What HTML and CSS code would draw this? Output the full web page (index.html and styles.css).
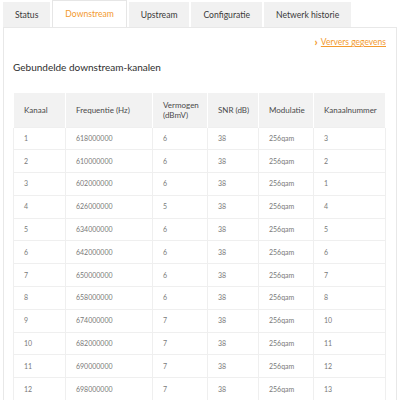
FILE: index.html
```html
<!DOCTYPE html>
<html lang="nl">
<head>
<meta charset="utf-8">
<title>Downstream</title>
<link rel="stylesheet" href="styles.css">
</head>
<body>
<nav class="tabs">
  <div class="tab">Status</div>
  <div class="tab active">Downstream</div>
  <div class="tab">Upstream</div>
  <div class="tab">Configuratie</div>
  <div class="tab">Netwerk historie</div>
</nav>
<main class="panel">
  <div class="refresh"><a href="#" class="link"><span class="chev">›</span><span class="link-text">Ververs gegevens</span></a></div>
  <h2 class="title">Gebundelde downstream-kanalen</h2>
  <table class="grid">
    <colgroup>
      <col class="c1"><col class="c2"><col class="c3"><col class="c4"><col class="c5"><col class="c6">
    </colgroup>
    <thead>
      <tr><th>Kanaal</th><th>Frequentie (Hz)</th><th>Vermogen<br>(dBmV)</th><th>SNR (dB)</th><th>Modulatie</th><th>Kanaalnummer</th></tr>
    </thead>
    <tbody>
      <tr><td>1</td><td>618000000</td><td>6</td><td>38</td><td>256qam</td><td>3</td></tr>
      <tr><td>2</td><td>610000000</td><td>6</td><td>38</td><td>256qam</td><td>2</td></tr>
      <tr><td>3</td><td>602000000</td><td>6</td><td>38</td><td>256qam</td><td>1</td></tr>
      <tr><td>4</td><td>626000000</td><td>5</td><td>38</td><td>256qam</td><td>4</td></tr>
      <tr><td>5</td><td>634000000</td><td>6</td><td>38</td><td>256qam</td><td>5</td></tr>
      <tr><td>6</td><td>642000000</td><td>6</td><td>38</td><td>256qam</td><td>6</td></tr>
      <tr><td>7</td><td>650000000</td><td>6</td><td>38</td><td>256qam</td><td>7</td></tr>
      <tr><td>8</td><td>658000000</td><td>6</td><td>38</td><td>256qam</td><td>8</td></tr>
      <tr><td>9</td><td>674000000</td><td>7</td><td>38</td><td>256qam</td><td>10</td></tr>
      <tr><td>10</td><td>682000000</td><td>7</td><td>38</td><td>256qam</td><td>11</td></tr>
      <tr><td>11</td><td>690000000</td><td>7</td><td>38</td><td>256qam</td><td>12</td></tr>
      <tr><td>12</td><td>698000000</td><td>7</td><td>38</td><td>256qam</td><td>13</td></tr>
    </tbody>
  </table>
</main>
</body>
</html>
```
FILE: styles.css
```css
* { box-sizing: border-box; }
html, body { margin: 0; padding: 0; background: #fff; }
body {
  font-family: Lato, "Open Sans", sans-serif;
  color: #444;
  overflow: hidden;
  height: 400px;
}
.tabs {
  display: flex;
  gap: 2px;
  padding: 2px 0 0 3px;
  height: 28px;
  position: relative;
  z-index: 1;
}
.tab {
  height: 25px;
  padding: 0 12px;
  display: flex;
  align-items: center;
  background: #f1f1f1;
  font-size: 8.6px;
  color: #3a3a3a;
}
.tab.active {
  background: #fff;
  color: #f39a2e;
  border: 1px solid #e6e6e6;
  border-bottom: none;
  height: 27px;
  margin-top: -2px;
}
.panel {
  margin: -1px 3px 0 3px;
  border: 1px solid #e8e8e8;
  border-bottom: none;
  padding: 8px 10px 0 9px;
  height: 373px;
  overflow: hidden;
}
.refresh {
  display: flex;
  justify-content: flex-end;
  line-height: 12px;
}
.link {
  color: #f39a2e;
  font-size: 8.5px;
  text-decoration: none;
  display: flex;
  align-items: center;
  gap: 3px;
}
.chev { font-weight: 900; font-size: 11px; line-height: 12px; }
.link-text { text-decoration: underline; }
.title {
  margin: 12px 0 19px 0;
  font-size: 10px;
  line-height: 14px;
  font-weight: 400;
  color: #2e2e2e;
}
.grid {
  width: 372px;
  border-collapse: collapse;
  table-layout: fixed;
}
.c1 { width: 52px; }
.c2 { width: 87px; }
.c3 { width: 55px; }
.c4 { width: 51px; }
.c5 { width: 55px; }
.c6 { width: 72px; }
.grid th {
  background: #f2f2f2;
  height: 34px;
  padding: 0 0 0 10px;
  text-align: left;
  font-weight: 400;
  font-size: 8px;
  line-height: 10px;
  color: #4a4a4a;
  border-left: 1px solid #fff;
  border-right: 1px solid #fff;
}
.grid td {
  height: 22.8px;
  padding: 0 0 1px 10px;
  font-size: 7px;
  color: #7a7a7a;
  border: 1px solid #efefef;
}
```
